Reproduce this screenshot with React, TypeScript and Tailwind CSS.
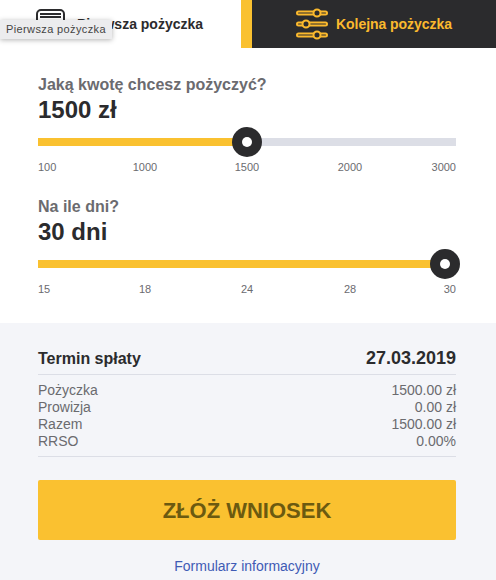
const ink = "#2b2b2d";

function SliderBlock({
  title,
  value,
  percent,
  thumbX,
  labels,
}: {
  title: string;
  value: string;
  percent: number;
  thumbX: number;
  labels: string[];
}) {
  return (
    <div>
      <p className="text-[16px] leading-[20px] font-bold text-[#6b6b6f]">{title}</p>
      <p className="mt-[1px] text-[24px] leading-[28px] font-bold text-[#2b2b2d]">{value}</p>
      <div className="relative mt-[14px] h-[8px] bg-[#dcdee6]">
        <div className="h-full bg-[#fac130]" style={{ width: `${percent}%` }} />
        <div
          className="absolute top-1/2 flex h-[30px] w-[30px] -translate-x-1/2 -translate-y-1/2 items-center justify-center rounded-full bg-[#2b2b2d]"
          style={{ left: thumbX }}
        >
          <div className="h-[10px] w-[10px] rounded-full bg-white" />
        </div>
      </div>
      <div className="mt-[14px] grid grid-cols-[57px_100px_104px_102px_55px] text-center text-[11px] leading-[14px] text-[#6b6b6f]">
        {labels.map((l, i) => (
          <span key={l} className={i === 0 ? "text-left" : i === labels.length - 1 ? "text-right" : ""}>
            {l}
          </span>
        ))}
      </div>
    </div>
  );
}

function Row({ label, value }: { label: string; value: string }) {
  return (
    <div className="flex justify-between text-[14px] leading-[17px] text-[#6b6b6f]">
      <span>{label}</span>
      <span>{value}</span>
    </div>
  );
}

export default function App() {
  return (
    <div className="relative h-[580px] w-[496px] overflow-hidden bg-white font-['Liberation_Sans',Arial,sans-serif]">
      {/* tabs */}
      <div className="flex h-[48px]">
        <div className="flex w-[241px] items-center rounded-tr-[4px] bg-white pl-[36px]">
          <svg width="30" height="30" viewBox="0 0 30 30" fill="none" stroke={ink} strokeWidth="2">
            <rect x="1" y="1" width="27" height="28" rx="4" />
            <path d="M4 5h21M4 8h21" />
          </svg>
          <span className="ml-[11px] text-[14px] font-bold text-[#2b2b2d]">Pierwsza pożyczka</span>
        </div>
        <div className="w-[11px] bg-[#fac130]" />
        <div className="flex flex-1 items-center bg-[#2b2b2d] pl-[44px]">
          <svg width="32" height="32" viewBox="0 0 32 32" fill="none" stroke="#fbb92d" strokeWidth="2">
            <rect x="1" y="3.5" width="30" height="3" rx="1.5" />
            <circle cx="21" cy="5" r="3.5" fill="#2b2b2d" />
            <rect x="1" y="14.5" width="30" height="3" rx="1.5" />
            <circle cx="10" cy="16" r="3.5" fill="#2b2b2d" />
            <rect x="1" y="25.5" width="30" height="3" rx="1.5" />
            <circle cx="21" cy="27" r="3.5" fill="#2b2b2d" />
          </svg>
          <span className="ml-[8px] text-[14px] tracking-[-0.05px] font-bold text-[#fbb92d]">Kolejna pożyczka</span>
        </div>
      </div>

      {/* tooltip */}
      <div className="absolute left-0 top-[20px] flex h-[19px] w-[112px] items-center justify-center bg-[#ececee] text-[11px] tracking-[0.38px] text-[#444] shadow-[0_1px_5px_rgba(0,0,0,0.3)]">
        Pierwsza pożyczka
      </div>

      {/* sliders */}
      <div className="flex flex-col gap-[23px] pl-[38px] pr-[40px] pt-[27px]">
        <SliderBlock
          title="Jaką kwotę chcesz pożyczyć?"
          value="1500 zł"
          percent={50}
          thumbX={209}
          labels={["100", "1000", "1500", "2000", "3000"]}
        />
        <SliderBlock
          title="Na ile dni?"
          value="30 dni"
          percent={100}
          thumbX={407}
          labels={["15", "18", "24", "28", "30"]}
        />
      </div>

      {/* summary */}
      <div className="absolute inset-x-0 bottom-0 top-[323px] bg-[#f4f5f9] pl-[38px] pr-[40px] pt-[25px]">
        <div className="flex items-center justify-between border-b border-[#dcdee6] pb-[5px] text-[#2b2b2d]">
          <span className="text-[16px] leading-[21px] font-bold">Termin spłaty</span>
          <span className="text-[18px] leading-[21px] font-bold">27.03.2019</span>
        </div>
        <div className="border-b border-[#dcdee6] pb-[6px] pt-[7px]">
          <Row label="Pożyczka" value="1500.00 zł" />
          <Row label="Prowizja" value="0.00 zł" />
          <Row label="Razem" value="1500.00 zł" />
          <Row label="RRSO" value="0.00%" />
        </div>
        <button className="mt-[23px] flex h-[60px] w-full items-center justify-center rounded-[2px] bg-[#fac130] text-[22px] font-bold text-[#6b5a10]">
          ZŁÓŻ WNIOSEK
        </button>
        <a className="mt-[17px] block text-center text-[14px] leading-[18px] text-[#3f5bb5]">
          Formularz informacyjny
        </a>
      </div>
    </div>
  );
}
